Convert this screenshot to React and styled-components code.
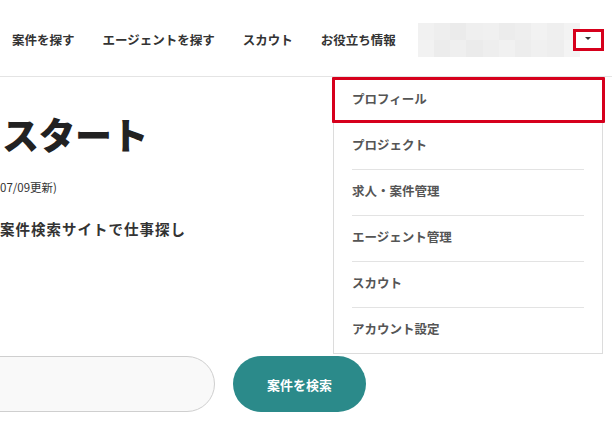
import React from "react";
import styled, { createGlobalStyle } from "styled-components";

const GlobalStyle = createGlobalStyle`
  html, body {
    margin: 0;
    padding: 0;
    background: #fff;
    overflow: hidden;
  }
  body {
    font-family: "Noto Sans CJK JP", "Noto Sans", sans-serif;
    color: #333;
  }
  * { box-sizing: border-box; }
`;

const navItems = ["案件を探す", "エージェントを探す", "スカウト", "お役立ち情報"];
const menuItems = [
  "プロフィール",
  "プロジェクト",
  "求人・案件管理",
  "エージェント管理",
  "スカウト",
  "アカウント設定",
];

// pixelated placeholder that hides the user name
const mosaic = [
  "#f1f1f1", "#eeeeee", "#ebebeb", "#efefef", "#f0f0f0", "#ececec", "#eeeeee", "#f2f2f2", "#efefef", "#f3f3f3",
  "#f2f2f2", "#ececec", "#efefef", "#ebebeb", "#eeeeee", "#f1f1f1", "#ededed", "#f0f0f0", "#eeeeee", "#f4f4f4",
];

const App = () => {
  return (
    <Page>
      <GlobalStyle />
      <Header>
        <Nav>
          {navItems.map((item) => (
            <NavLink key={item}>{item}</NavLink>
          ))}
        </Nav>
        <UserArea>
          <NameBlur>
            {mosaic.map((c, i) => (
              <Tile key={i} style={{ background: c }} />
            ))}
          </NameBlur>
          <Toggle aria-label="menu">
            <Caret />
          </Toggle>
        </UserArea>
      </Header>

      <Hero>
        <Title>スタート</Title>
        <Updated>07/09更新)</Updated>
        <Lead>案件検索サイトで仕事探し</Lead>
        <SearchRow>
          <SearchInput />
          <SearchButton>案件を検索</SearchButton>
        </SearchRow>
      </Hero>

      <Dropdown>
        {menuItems.map((item, i) => (
          <MenuItem key={item} active={i === 0}>
            <MenuLabel>{item}</MenuLabel>
          </MenuItem>
        ))}
      </Dropdown>
    </Page>
  );
};

const Page = styled.div`
  position: relative;
  width: 612px;
  height: 434px;
  overflow: hidden;
`;

const Header = styled.header`
  height: 77px;
  display: flex;
  align-items: center;
  padding: 0 0 0 12px;
  border-bottom: 1px solid #e4e4e4;
`;

const Nav = styled.nav`
  display: flex;
  gap: 28px;
  padding-top: 5px;
`;

const NavLink = styled.a`
  font-size: 12.5px;
  font-weight: 700;
  color: #333;
  white-space: nowrap;
  line-height: 1;
`;

const UserArea = styled.div`
  display: flex;
  align-items: center;
  margin-left: 22px;
  margin-top: 3px;
`;

const NameBlur = styled.div`
  width: 162px;
  height: 34px;
  display: grid;
  grid-template-columns: repeat(10, 1fr);
  grid-template-rows: repeat(2, 1fr);
`;

const Tile = styled.span`
  display: block;
`;

const Toggle = styled.button`
  width: 31px;
  height: 22px;
  margin-left: -7px;
  padding: 0;
  border: 3px solid #d6001c;
  background: #fff;
  display: flex;
  align-items: center;
  justify-content: center;
  position: relative;
`;

const Caret = styled.span`
  width: 0;
  height: 0;
  border-left: 3px solid transparent;
  border-right: 3px solid transparent;
  border-top: 3px solid #333;
  margin-bottom: 3px;
`;

const Hero = styled.main`
  padding-top: 30px;
`;

const Title = styled.h1`
  margin: 0 0 0 2px;
  font-size: 37px;
  font-weight: 900;
  color: #222;
  line-height: 54px;
  letter-spacing: -0.5px;
`;

const Updated = styled.p`
  margin: 17px 0 0 0;
  font-size: 11.5px;
  color: #333;
  line-height: 18px;
`;

const Lead = styled.p`
  margin: 22px 0 0 0;
  font-size: 14.5px;
  font-weight: 700;
  letter-spacing: 1px;
  color: #333;
  line-height: 22px;
`;

const SearchRow = styled.div`
  display: flex;
  align-items: center;
  gap: 18px;
  margin: 116px 0 0 -60px;
`;

const SearchInput = styled.input`
  width: 275px;
  height: 56px;
  border-radius: 28px;
  border: 1px solid #cfcfcf;
  background: #f9f9f9;
  outline: none;
`;

const SearchButton = styled.button`
  width: 133px;
  height: 56px;
  border-radius: 28px;
  border: none;
  background: #2b8a8a;
  color: #fff;
  font-family: inherit;
  font-size: 13px;
  font-weight: 700;
`;

const Dropdown = styled.ul`
  position: absolute;
  top: 77px;
  left: 333px;
  width: 270px;
  margin: 0;
  padding: 0;
  list-style: none;
  background: #fff;
  border: 1px solid #dcdcdc;
  border-top: none;
`;

const MenuItem = styled.li`
  position: relative;
  height: 46px;
  display: flex;
  align-items: center;
  padding: 0 18px;

  & + & > span {
    border-top: 1px solid #e3e3e3;
  }

  ${({ active }) =>
    active &&
    `
    &::after {
      content: "";
      position: absolute;
      top: 0;
      left: -2px;
      right: -3px;
      bottom: 0;
      border: 3px solid #d6001c;
      border-radius: 1px;
    }
  `}
`;

const MenuLabel = styled.span`
  flex: 1;
  height: 100%;
  display: flex;
  align-items: center;
  padding-bottom: 4px;
  font-size: 12.5px;
  font-weight: 700;
  color: #555;
`;

export default App;
